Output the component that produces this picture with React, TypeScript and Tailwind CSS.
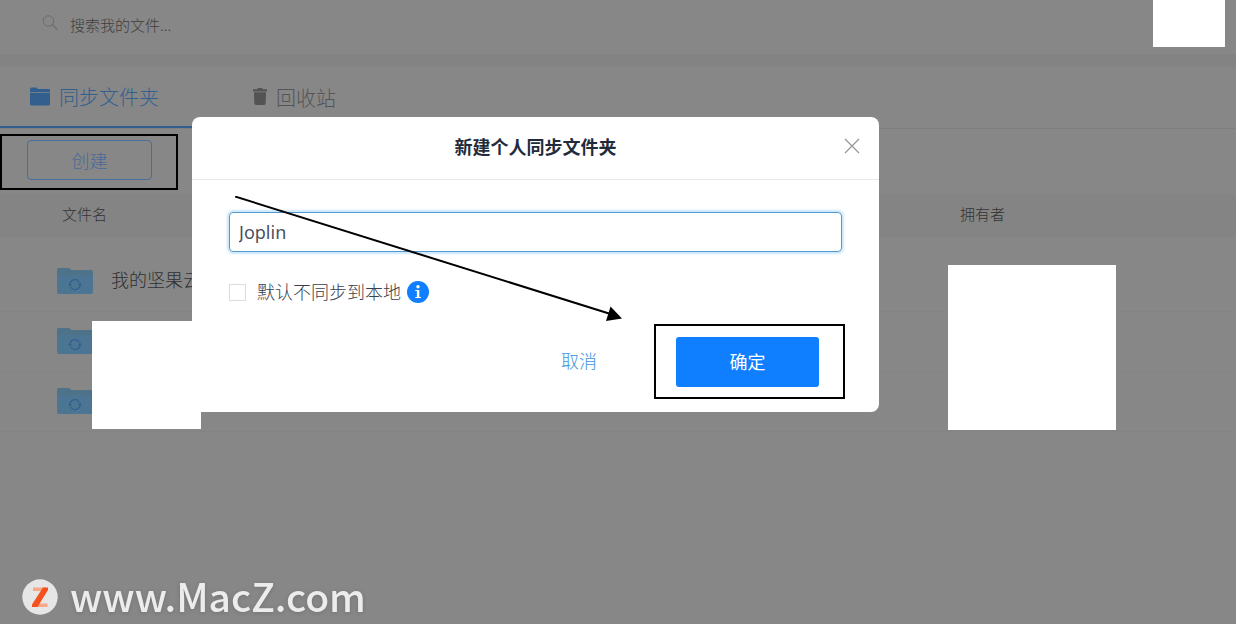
import { useState } from "react";

const rows = [
  { id: 1, name: "我的坚果云" },
  { id: 2, name: "" },
  { id: 3, name: "" },
];

function SearchIcon() {
  return (
    <svg className="size-4 shrink-0" viewBox="0 0 16 16" fill="none" stroke="#6c6c6c" aria-hidden="true">
      <circle cx="6.5" cy="6" r="5.2" />
      <path d="M10.4 9.8 15.5 14.6" strokeWidth="1.3" />
    </svg>
  );
}

function FolderIcon() {
  return (
    <svg className="h-5 w-5 shrink-0" viewBox="0 0 20 20" fill="#335f8f" aria-hidden="true">
      <path d="M0 5V2.3Q0 .5 1.5 .5H6Q7 .5 7.4 1.4L7.8 2.1H19Q20 2.1 20 3.1V5Z" />
      <path d="M0 5.7H20V17Q20 18.5 18.5 18.5H1.5Q0 18.5 0 17Z" />
    </svg>
  );
}

function TrashIcon() {
  return (
    <svg className="mb-1 h-5 w-4 shrink-0" viewBox="0 0 16 20" fill="#535353" aria-hidden="true">
      <path d="M1 3.2H5L6 2H10L11 3.2H15V5.5H1Z" />
      <path d="M2 6.2H14L13.7 17Q13.6 19 12 19H4Q2.4 19 2.3 17Z" />
    </svg>
  );
}

function SyncFolderIcon() {
  return (
    <svg className="h-7 w-9 shrink-0" viewBox="0 0 36 28" aria-hidden="true">
      <path d="M0 26V2.5Q0 1 1.5 1H12.5L14 3H34Q36 3 36 5V20H0Z" fill="#4e7288" />
      <path d="M0 8H36V25Q36 27 34 27H2Q0 27 0 25Z" fill="#4b7592" />
      <g fill="none" stroke="#325f8f" strokeWidth="1.3">
        <path d="M13 18.3A5 5 0 0 1 22.3 15.2" />
        <path d="M23 16.9A5 5 0 0 1 13.7 20" />
      </g>
      <path d="M11.2 17.2H14.8L13 19.6ZM21.2 18H24.8L23 15.6Z" fill="#325f8f" />
    </svg>
  );
}

function InfoIcon() {
  return (
    <svg className="size-[22px] shrink-0" viewBox="0 0 22 22" aria-label="说明" role="img">
      <circle cx="11" cy="11" r="11" fill="#0f7fff" />
      <circle cx="11" cy="5.7" r="1.7" fill="#fff" />
      <path d="M8.3 9H12.3V15.9H13.9V17H8.3V15.9H9.9V10.1H8.3Z" fill="#fff" />
    </svg>
  );
}

function NewFolderDialog() {
  const [name, setName] = useState("Joplin");
  const [local, setLocal] = useState(false);
  return (
    <section
      role="dialog"
      aria-labelledby="dialog-title"
      className="absolute left-48 top-[117px] w-[687px] rounded-lg bg-white text-lg"
    >
      <header className="relative flex h-[63px] items-center justify-center border-b border-[#e6e8eb] pb-1">
        <h2 id="dialog-title" className="text-lg font-bold text-[#222b3c]">新建个人同步文件夹</h2>
        <button type="button" aria-label="关闭" className="absolute right-[19px] top-[21px]">
          <svg className="size-4" viewBox="0 0 16 16" fill="none" stroke="#979797" strokeWidth="1.3">
            <path d="M1 1 15 15M15 1 1 15" />
          </svg>
        </button>
      </header>
      <form className="px-[37px] pb-[25px] pt-8" onSubmit={(e) => e.preventDefault()}>
        <input
          aria-label="文件夹名称"
          value={name}
          onChange={(e) => setName(e.target.value)}
          className="block h-10 w-full rounded border border-[#5598ce] px-[9px] font-['Noto_Sans'] font-normal text-[#4b5160] shadow-[0_0_2px_2px_#cbe8fb] outline-none"
        />
        <div className="mt-[26px] flex h-7 items-center">
          <input
            id="no-sync"
            type="checkbox"
            checked={local}
            onChange={(e) => setLocal(e.target.checked)}
            className="size-[17px] appearance-none border border-[#dadde0] bg-white checked:bg-[#0f7fff]"
          />
          <label htmlFor="no-sync" className="ml-[11px] mr-1.5 pb-0.5 font-light text-[#3a404c]">默认不同步到本地</label>
          <InfoIcon />
        </div>
        <div className="mt-[31px] flex items-center justify-end pr-[23px]">
          <button type="button" className="mr-[79px] pb-1 font-light text-[#3e93dc]">取消</button>
          <button type="submit" className="h-[50px] w-[143px] rounded-[3px] bg-[#0f7fff] pb-0.5 font-normal text-white">确定</button>
        </div>
      </form>
    </section>
  );
}

export default function App() {
  return (
    <div className="relative min-h-screen overflow-hidden bg-[#878787] font-['Noto_Sans_CJK_SC','Noto_Sans',sans-serif] font-light">
      <div className="flex h-[54px] items-center gap-3 pb-2 pl-[42px]">
        <SearchIcon />
        <input
          aria-label="搜索"
          placeholder="搜索我的文件..."
          className="w-60 bg-transparent pt-1 text-[15px] outline-none placeholder:text-[#3e3e3e]"
        />
      </div>
      <div className="h-[13px] bg-[#838383]" />
      <nav className="flex h-[62px] border-b border-[#7f7f7f] text-xl">
        <a href="#files" className="flex w-[221px] items-center gap-[9px] border-b-2 border-[#335f8f] pl-[30px] text-[#335f8f]">
          <FolderIcon />
          同步文件夹
        </a>
        <a href="#trash" className="ml-[31px] flex items-center gap-2 text-[#555555]">
          <TrashIcon />
          回收站
        </a>
      </nav>
      <div className="flex h-[65px] items-start pl-[27px] pt-[11px]">
        <button type="button" className="h-10 w-[125px] rounded border border-[#4b6d99] text-lg text-[#4a6a97]">创建</button>
      </div>
      <table className="w-full table-fixed text-left">
        <thead>
          <tr className="h-[43px] bg-[#848484] text-[15px] text-[#333333]">
            <th className="w-[960px] pb-0.5 pl-[62px] font-light">文件名</th>
            <th className="pb-0.5 font-light">拥有者</th>
          </tr>
        </thead>
        <tbody>
          {rows.map((row) => (
            <tr key={row.id} className="h-[60px] border-b border-[#838383] first:h-[74px]">
              <td className={row.id === 1 ? "pl-[57px] pt-3.5" : "pl-[57px]"}>
                <div className="flex items-center gap-[18px] text-lg text-[#303030]">
                  <SyncFolderIcon />
                  <span className="pb-1">{row.name}</span>
                </div>
              </td>
              <td />
            </tr>
          ))}
        </tbody>
      </table>

      <div className="absolute left-[1153px] top-0 h-[47px] w-[72px] bg-white" />
      <div className="absolute left-[948px] top-[265px] h-[165px] w-[168px] bg-white" />
      <div className="absolute left-[92px] top-[321px] h-[108px] w-[109px] bg-white" />

      <NewFolderDialog />

      <div className="pointer-events-none absolute left-0 top-[134px] h-14 w-[178px] border-2 border-black" />
      <div className="pointer-events-none absolute left-[654px] top-[324px] h-[75px] w-[191px] border-2 border-black" />
      <svg className="pointer-events-none absolute left-[235px] top-[196px] h-[126px] w-[388px]" viewBox="0 0 388 126" aria-hidden="true">
        <path d="M0 .5 374 117.5" stroke="#000" strokeWidth="2" />
        <path d="M375.5 110.5 387 122.5 371 125Z" fill="#000" />
      </svg>

      <div className="absolute left-[22px] top-[570px] flex h-[54px] items-center gap-3">
        <svg className="size-9" viewBox="0 0 36 36" aria-hidden="true">
          <circle cx="18" cy="18" r="17.7" fill="#e6e6e6" />
          <path d="M11 8.5H24V12H11Z" fill="#f9a78a" />
          <path d="M12 24.5H25.5V28H12Z" fill="#f9a78a" />
          <path d="M21 8.5H26V11L15.5 28H10V25.5Z" fill="#f4511e" />
        </svg>
        <span className="pb-1 text-[39px] font-medium text-[#ececec] drop-shadow-sm">www.MacZ.com</span>
      </div>
    </div>
  );
}
